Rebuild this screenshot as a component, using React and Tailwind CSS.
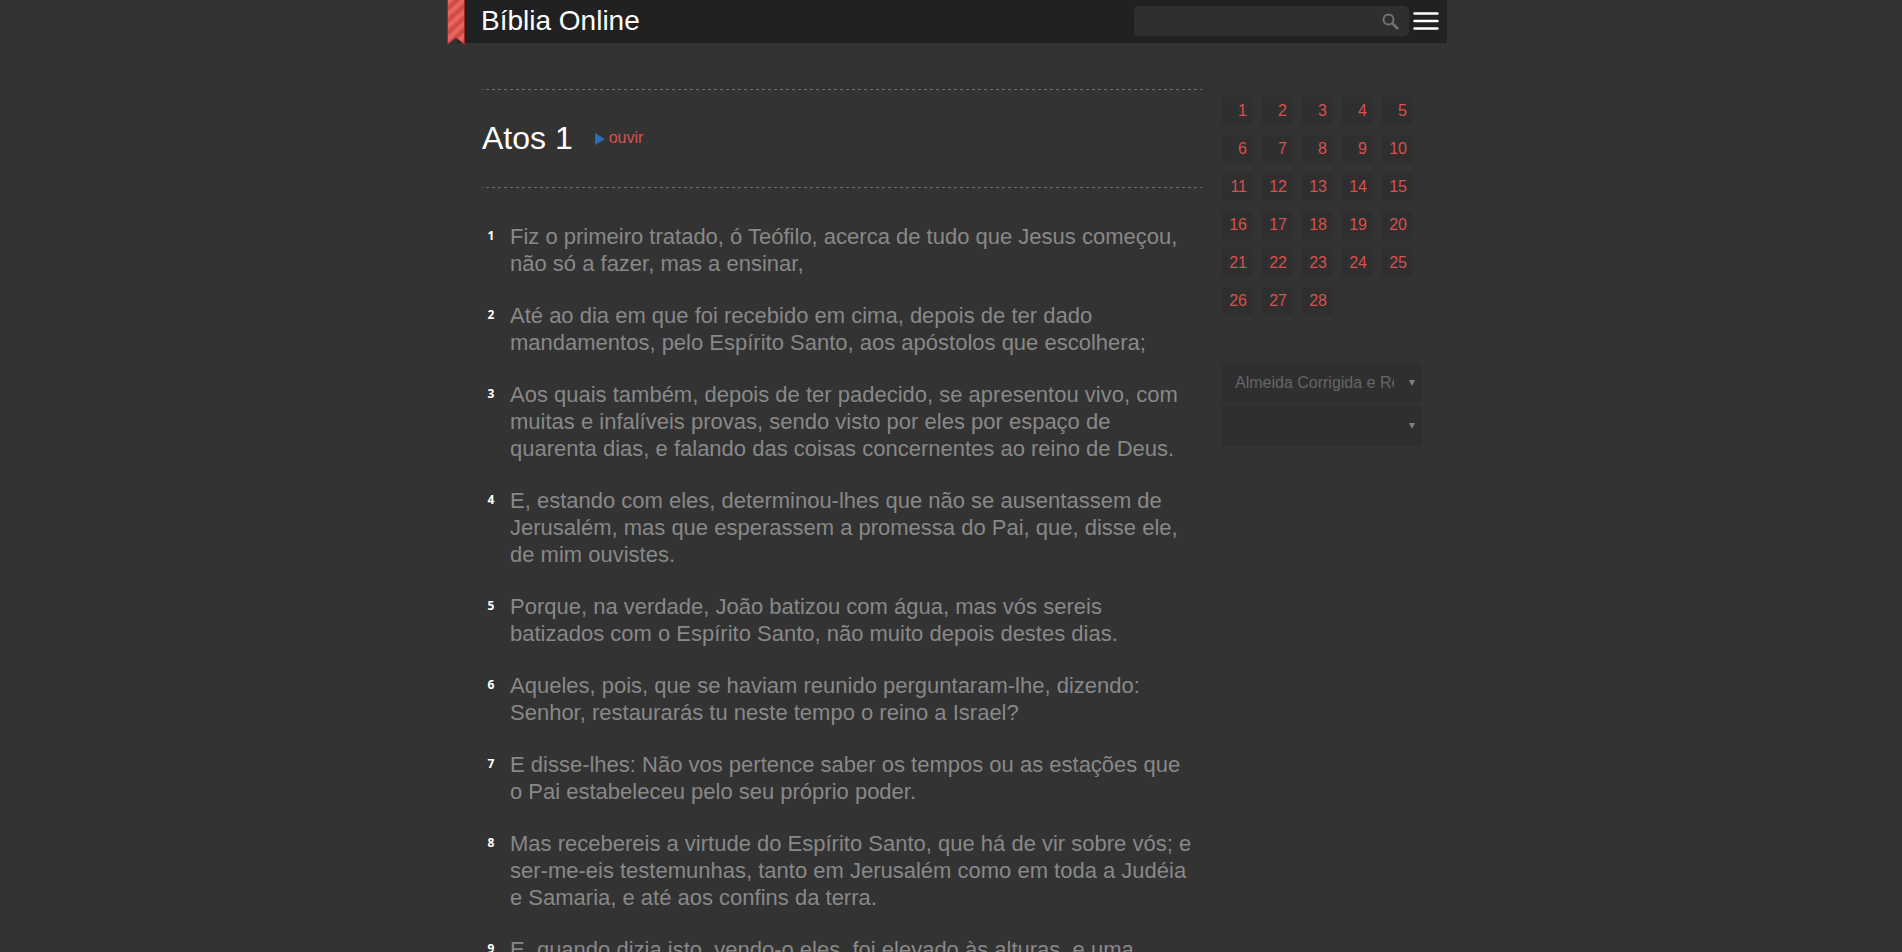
const verses = [
  "Fiz o primeiro tratado, ó Teófilo, acerca de tudo que Jesus começou, não só a fazer, mas a ensinar,",
  "Até ao dia em que foi recebido em cima, depois de ter dado mandamentos, pelo Espírito Santo, aos apóstolos que escolhera;",
  "Aos quais também, depois de ter padecido, se apresentou vivo, com muitas e infalíveis provas, sendo visto por eles por espaço de quarenta dias, e falando das coisas concernentes ao reino de Deus.",
  "E, estando com eles, determinou-lhes que não se ausentassem de Jerusalém, mas que esperassem a promessa do Pai, que, disse ele, de mim ouvistes.",
  "Porque, na verdade, João batizou com água, mas vós sereis batizados com o Espírito Santo, não muito depois destes dias.",
  "Aqueles, pois, que se haviam reunido perguntaram-lhe, dizendo: Senhor, restaurarás tu neste tempo o reino a Israel?",
  "E disse-lhes: Não vos pertence saber os tempos ou as estações que o Pai estabeleceu pelo seu próprio poder.",
  "Mas recebereis a virtude do Espírito Santo, que há de vir sobre vós; e ser-me-eis testemunhas, tanto em Jerusalém como em toda a Judéia e Samaria, e até aos confins da terra.",
  "E, quando dizia isto, vendo-o eles, foi elevado às alturas, e uma nuvem o recebeu, ocultando-o a seus olhos.",
];

const chapters = Array.from({ length: 28 }, (_, i) => i + 1);

function Ribbon() {
  return (
    <svg className="absolute top-0 -left-[10px]" width="18" height="46" viewBox="0 0 18 46" aria-hidden="true">
      <defs>
        <pattern id="stripes" width="9" height="9" patternUnits="userSpaceOnUse" patternTransform="rotate(-42)">
          <rect width="9" height="9" fill="#d34b49" />
          <rect width="9" height="4.5" fill="#e8665f" />
        </pattern>
      </defs>
      <path d="M0.5 -1V44.5L9 37.8L17.5 44.5V-1Z" fill="url(#stripes)" stroke="#9c2625" strokeWidth="1" />
    </svg>
  );
}

function Header() {
  return (
    <header className="relative flex h-[43px] items-center bg-[#212121] pr-2 pb-px pl-6">
      <Ribbon />
      <a href="#inicio" className="text-[28px] leading-8 text-white">Bíblia Online</a>
      <form className="mr-1 ml-auto flex h-[30px] w-[275px] items-center rounded-[5px] bg-[#2f2f2f] pr-2.5" role="search">
        <input type="search" aria-label="Buscar" className="h-full min-w-0 flex-1 bg-transparent px-2 text-base text-[#888] outline-none" />
        <button type="button" aria-label="Buscar">
          <svg width="17" height="17" viewBox="0 0 17 17" fill="none" stroke="#78726f" aria-hidden="true">
            <circle cx="6.5" cy="6.5" r="5" strokeWidth="1.9" />
            <path d="M10.2 10.2L16 16" strokeWidth="2.6" />
          </svg>
        </button>
      </form>
      <button type="button" aria-label="Menu">
        <svg width="26" height="20" viewBox="0 0 26 20" stroke="#fff" strokeWidth="2.4" strokeLinecap="round" aria-hidden="true">
          <path d="M1.5 2.5H24.5M1.5 10H24.5M1.5 17.5H24.5" />
        </svg>
      </button>
    </header>
  );
}

function Picker({ label, option }) {
  return (
    <div className="relative h-10 bg-[#2f2f2f]">
      <select aria-label={label} className="h-full w-full appearance-none bg-transparent pr-7 pl-[13px] text-base text-[#666] outline-none">
        <option>{option}</option>
      </select>
      <svg className="pointer-events-none absolute top-[17px] right-[7px]" width="6" height="6" viewBox="0 0 6 6" aria-hidden="true">
        <path d="M0 0H6L3 6Z" fill="#808080" />
      </svg>
    </div>
  );
}

function Dashes() {
  return (
    <div
      aria-hidden="true"
      className="h-px bg-[repeating-linear-gradient(90deg,#6b6b6b_0_1px,transparent_1px_4px,#6b6b6b_4px_6px)]"
    />
  );
}

export default function App() {
  return (
    <div className="h-screen overflow-y-auto bg-[#333] font-['Liberation_Sans',Arial,sans-serif] [scrollbar-width:none]">
      <div className="mx-auto max-w-[992px] pl-0.5">
        <Header />
        <div className="flex items-start gap-5 pt-[46px] pr-[25px] pl-[25px]">
          <main className="min-w-0 flex-1">
            <Dashes />
            <div className="flex h-[97px] items-center gap-[22px] pb-0.5">
              <h1 className="text-[32px] leading-10 text-white">Atos 1</h1>
              <a href="#ouvir" className="flex items-center gap-1 text-base text-[#d9504d]">
                <svg className="mt-0.5" width="10" height="12" viewBox="0 0 10 12" aria-hidden="true">
                  <path d="M0 0L10 6L0 12Z" fill="#2a6db5" />
                </svg>
                ouvir
              </a>
            </div>
            <Dashes />
            <ol className="mt-[35px] flex flex-col gap-[25px] pr-1.5 pb-10">
              {verses.map((text, i) => (
                <li key={i} className="flex">
                  <span className="w-[18px] shrink-0 text-center font-['Noto_Sans',sans-serif] text-xs leading-[26px] font-bold text-white">{i + 1}</span>
                  <p className="ml-2.5 text-[22px] leading-[27px] text-[#888]">{text}</p>
                </li>
              ))}
            </ol>
          </main>
          <aside className="mt-2 w-[200px] shrink-0">
            <nav aria-label="Capítulos" className="flex flex-wrap gap-2.5">
              {chapters.map((n) => (
                <a key={n} href={`#capitulo-${n}`} className="h-7 w-[30px] bg-[#2f2f2f] pr-[5px] text-right text-base leading-7 text-[#d9504d]">
                  {n}
                </a>
              ))}
            </nav>
            <div className="mt-12 flex flex-col gap-[3px]">
              <Picker label="Versão" option="Almeida Corrigida e Revisada Fiel" />
              <Picker label="Segunda versão" option="" />
            </div>
          </aside>
        </div>
      </div>
    </div>
  );
}
